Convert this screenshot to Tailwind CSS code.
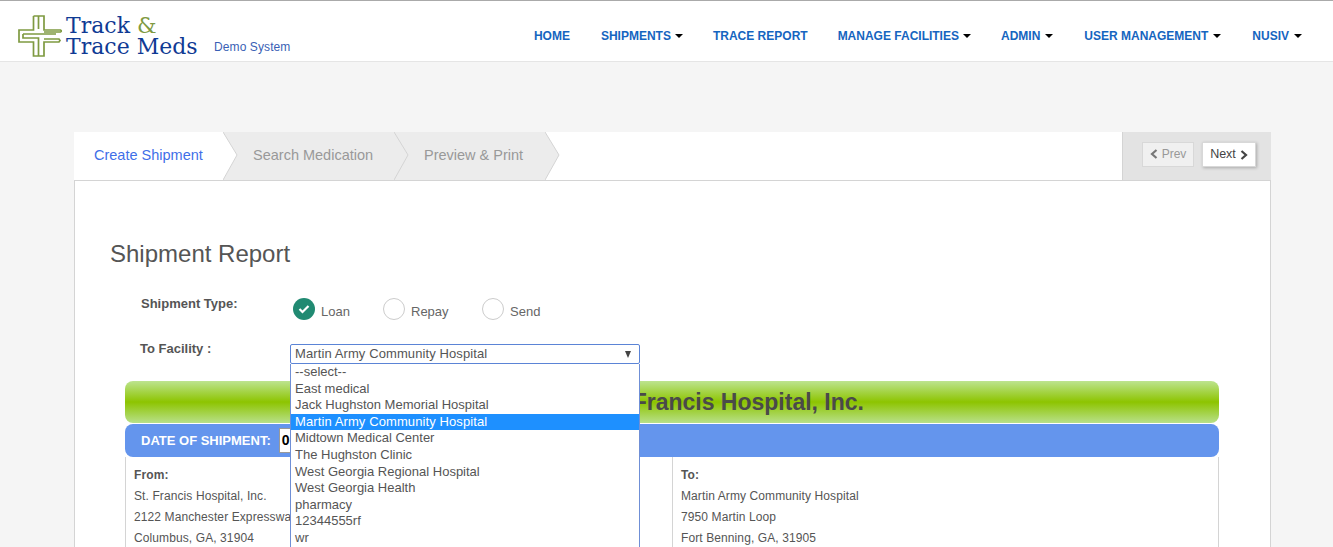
<!DOCTYPE html>
<html lang="en">
<head>
  <meta charset="UTF-8">
  <meta name="viewport" content="width=device-width, initial-scale=1.0">
  <title>Track & Trace Meds</title>
  <script src="https://cdn.jsdelivr.net/npm/@tailwindcss/browser@4"></script>
</head>
<body class="h-screen overflow-hidden bg-[#f5f5f5] font-['Liberation_Sans',Arial,sans-serif] text-[#555]">
  <!-- Navbar -->
  <header class="h-[62px] bg-white border-t border-t-[#aaa] border-b border-b-[#e5e5e5] flex items-start">
    <svg class="ml-[18px] mt-[14px] w-[44px] h-[42px] shrink-0" viewBox="0 0 44 42" fill="none" stroke="#7f9a41" stroke-width="1.700">
      <path d="M15.500 1H26V15H42.500L43.500 16 42.500 17H26M15.500 1V15H1V27H15.500V41H26V27H41L42 25.500 41 24H26"/>
      <path d="M20.500 1V14M20.500 28V41M5 19H38M5 19V23H20.500V28M5 21V23"/>
    </svg>
    <div class="ml-[4px] mt-[14px] font-['DejaVu_Serif',serif] text-[22px] leading-[21px] text-[#0f3a94] w-[132px] shrink-0">
      <div class="h-[21px]">Track <span class="text-[#7f9a41]">&amp;</span></div>
      <div class="h-[21px] whitespace-nowrap">Trace Meds</div>
    </div>
    <div class="ml-[16px] mt-[39px] text-[12px] leading-[14px] tracking-[0.1px] text-[#3a5fb5]">Demo System</div>
    <nav class="ml-auto mr-[31px] mt-[28px] flex gap-[30px] text-[12px] leading-[14px] font-bold text-[#1565c0] whitespace-nowrap">
      <a>HOME</a>
      <a class="ml-[1px] flex items-center gap-[4px]">SHIPMENTS <span class="w-0 h-0 border-x-[4px] border-x-transparent border-t-[4px] border-t-black"></span></a>
      <a>TRACE REPORT</a>
      <a class="flex items-center gap-[4px]">MANAGE FACILITIES <span class="w-0 h-0 border-x-[4px] border-x-transparent border-t-[4px] border-t-black"></span></a>
      <a class="flex items-center gap-[5px]">ADMIN <span class="w-0 h-0 border-x-[4px] border-x-transparent border-t-[4px] border-t-black"></span></a>
      <a class="ml-[1px] flex items-center gap-[5px]">USER MANAGEMENT <span class="w-0 h-0 border-x-[4px] border-x-transparent border-t-[4px] border-t-black"></span></a>
      <a class="ml-[1px] flex items-center gap-[5px]">NUSIV <span class="w-0 h-0 border-x-[4px] border-x-transparent border-t-[4px] border-t-black"></span></a>
    </nav>
  </header>

  <main class="mx-[74px] mt-[70px] w-[1197px]">
    <!-- Wizard steps -->
    <div class="h-[49px] bg-white border-b border-[#d4d4d4] flex">
      <div class="relative z-30 w-[149px] bg-white flex items-center pl-[20px] pb-[1px] text-[14.500px] text-[#3f6fe8]">
        Create Shipment
        <svg class="absolute left-full top-0 w-[15px] h-[48px]" viewBox="0 0 15 48"><path d="M0 0L14 23 0 48Z" fill="#fff"/><path d="M0 0L14 23 0 48" fill="none" stroke="#d4d4d4"/></svg>
      </div>
      <div class="relative z-20 w-[171px] bg-[#ececec] flex items-center pl-[30px] pb-[1px] text-[14.500px] text-[#999]">
        Search Medication
        <svg class="absolute left-full top-0 w-[15px] h-[48px]" viewBox="0 0 15 48"><path d="M0 0L14 23 0 48Z" fill="#ececec"/><path d="M0 0L14 23 0 48" fill="none" stroke="#d4d4d4"/></svg>
      </div>
      <div class="relative z-10 w-[151px] bg-[#ececec] flex items-center pl-[30px] pb-[1px] text-[14.500px] text-[#999]">
        Preview &amp; Print
        <svg class="absolute left-full top-0 w-[15px] h-[48px]" viewBox="0 0 15 48"><path d="M0 0L14 23 0 48Z" fill="#ececec"/><path d="M0 0L14 23 0 48" fill="none" stroke="#d4d4d4"/></svg>
      </div>
      <div class="ml-auto w-[149px] bg-[#e3e3e3] border-l border-[#d4d4d4] flex items-start pt-[10px] pl-[19px] gap-[8px] text-[12px]">
        <button class="w-[52px] h-[25px] pb-[2px] bg-[#f0f0f0] border border-[#d8d8d8] text-[#999] flex items-center justify-center gap-[4px]">
          <svg class="w-[8px] h-[10px]" viewBox="0 0 8 10" fill="none" stroke="#777" stroke-width="2.200"><path d="M6.500 1L2 5l4.500 4"/></svg>Prev
        </button>
        <button class="w-[54px] h-[25px] bg-white border border-[#d8d8d8] shadow-[1px_1px_3px_rgba(0,0,0,0.25)] text-[12.500px] text-[#444] flex items-center justify-center gap-[4px]">
          Next<svg class="w-[8px] h-[10px]" viewBox="0 0 8 10" fill="none" stroke="#444" stroke-width="2.200"><path d="M1.500 1L6 5 1.500 9"/></svg>
        </button>
      </div>
    </div>

    <!-- Form card -->
    <section class="relative bg-white border-x border-[#d4d4d4] h-[366px] overflow-hidden px-[35px] pt-[58px]">
      <h1 class="text-[24px] leading-[30px] text-[#555]">Shipment Report</h1>

      <div class="flex mt-[27px] h-[48px]">
        <label class="w-[180px] pl-[31px] text-[13px] leading-[16px] font-bold text-[#555]">Shipment Type:</label>
        <div class="flex items-start text-[13px] leading-[22px] text-[#666] pt-[2px]">
          <span class="ml-[3px] w-[22px] h-[22px] rounded-full bg-[#218a72] flex items-center justify-center">
            <svg class="w-[12px] h-[10px]" viewBox="0 0 12 10" fill="none" stroke="#fff" stroke-width="2.200"><path d="M1.500 5l3 3 6-6"/></svg>
          </span>
          <span class="ml-[6px] mt-[3px] w-[62px]">Loan</span>
          <span class="w-[22px] h-[22px] rounded-full bg-white border border-[#ccc]"></span>
          <span class="ml-[6px] mt-[3px] w-[71px]">Repay</span>
          <span class="w-[22px] h-[22px] rounded-full bg-white border border-[#ccc]"></span>
          <span class="ml-[6px] mt-[3px]">Send</span>
        </div>
      </div>

      <div class="flex h-[37px]">
        <label class="w-[180px] pl-[30px] -mt-[3px] text-[13px] leading-[16px] font-bold text-[#555]">To Facility :</label>
        <div class="w-[350px] h-[20px] border border-[#5b84d6] rounded-[2px] pl-[4px] pr-[8px] flex items-center justify-between text-[13px] tracking-[0.1px] text-[#555]">
          Martin Army Community Hospital
          <span class="w-0 h-0 border-x-[3.500px] border-x-transparent border-t-[7px] border-t-[#444]"></span>
        </div>
      </div>

      <!-- Header bars -->
      <div class="ml-[15px] w-[1094px] h-[42px] pt-[1px] rounded-[8px] bg-[linear-gradient(#bde48f,#8dc400_50%,#b8e08a)] flex items-center justify-end pr-[355px] text-[23px] font-bold text-[#4a4a4a]">
        St. Francis Hospital, Inc.
      </div>
      <div class="mt-[1px] ml-[15px] w-[1094px] h-[33px] rounded-[8px] bg-[#6495ed] flex items-center pl-[16px] text-[13px] font-bold text-white">
        DATE OF SHIPMENT:
        <span class="ml-[8px] w-[60px] h-[25px] bg-white border border-[#999] pl-[2px] text-[14px] leading-[23px] text-black">0</span>
      </div>

      <!-- Addresses -->
      <div class="ml-[15px] w-[1094px] grid grid-cols-2 border-x border-[#d4d4d4] text-[12px] leading-[21px] tracking-[0.1px] text-[#555]">
        <div class="pl-[8px] pt-[8px]">
          <p class="font-bold">From:</p>
          <p>St. Francis Hospital, Inc.</p>
          <p>2122 Manchester Expressway</p>
          <p>Columbus, GA, 31904</p>
        </div>
        <div class="pl-[8px] pt-[8px] border-l border-[#d4d4d4]">
          <p class="font-bold">To:</p>
          <p>Martin Army Community Hospital</p>
          <p>7950 Martin Loop</p>
          <p>Fort Benning, GA, 31905</p>
        </div>
      </div>

      <!-- Open select list -->
      <ul class="absolute left-[215px] top-[183px] w-[350px] bg-white border border-[#6f8fd6] border-t-0 text-[13px] leading-[16.600px] text-[#555] pb-[20px]">
        <li class="pl-[4px]">--select--</li>
        <li class="pl-[4px]">East medical</li>
        <li class="pl-[4px]">Jack Hughston Memorial Hospital</li>
        <li class="pl-[4px] bg-[#1e90ff] text-white tracking-[0.1px]">Martin Army Community Hospital</li>
        <li class="pl-[4px]">Midtown Medical Center</li>
        <li class="pl-[4px]">The Hughston Clinic</li>
        <li class="pl-[4px]">West Georgia Regional Hospital</li>
        <li class="pl-[4px]">West Georgia Health</li>
        <li class="pl-[4px]">pharmacy</li>
        <li class="pl-[4px]">12344555rf</li>
        <li class="pl-[4px]">wr</li>
      </ul>
    </section>
  </main>
</body>
</html>
